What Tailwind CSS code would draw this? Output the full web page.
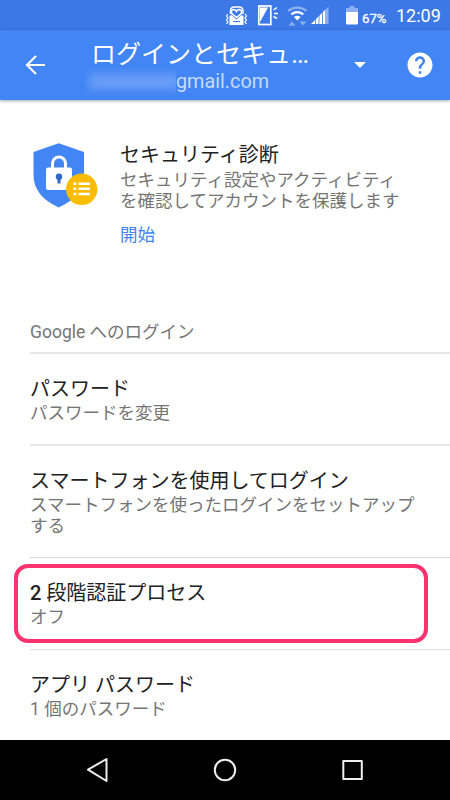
<!DOCTYPE html>
<html lang="ja">
<head>
<meta charset="utf-8">
<title>ログインとセキュリティ</title>
<script src="https://cdn.jsdelivr.net/npm/@tailwindcss/browser@4"></script>
</head>
<body class="w-[450px] h-[800px] overflow-hidden bg-white font-[Roboto,'Noto_Sans_CJK_JP',sans-serif]">
<div class="flex flex-col h-full">
  <!-- Status bar -->
  <div class="h-[30px] shrink-0 bg-[#3c78e6] flex items-center text-white">
    <svg class="ml-[224px] shrink-0" width="135" height="30" viewBox="224 0 135 30" fill="none" stroke="#fff">
      <path d="M230.500 14V11q0-4 4-4h4.500q4 0 4 4V14" stroke-width="1.500"/>
      <path d="M229.500 16l2-1 5 4.500 5-4.500 2 1v9h-14z" fill="#fff" stroke="none"/>
      <path d="M236.500 17.500 231.800 13.500Q230.500 10 233.500 9.500 235.500 9.500 236.500 11.500 237.500 9.500 239.500 9.500 242.500 10 241.200 13.500Z" stroke-width="1.600" fill="#3c78e6"/>
      <path d="M233 21.500h7" stroke="#3c78e6" stroke-width="1"/>
      <path d="M228 14l-1.500 2 1.500 2-1.500 2 1.500 2-1.500 2M245 14l1.500 2-1.500 2 1.500 2-1.500 2 1.500 2" stroke-width="1.200"/>
      <rect x="258.800" y="6" width="12" height="18.500" stroke-width="1.700"/>
      <path d="M260 7.500h8L260 22z" fill="#fff" stroke="none"/>
      <path d="M273.500 10l3.500-2.500M274 13.500h4M273.500 16.500l3.500 2" stroke-width="1.500"/>
      <path d="M288 10.700q9.300-6.500 18.600 0" stroke="#8bb0f1" stroke-width="2.500"/>
      <path d="M291.300 14.300q6-4.300 12 0" stroke-width="2.200"/>
      <path d="M294 17q3.300-2.500 6.600 0L297.300 20.500z" fill="#fff" stroke="none"/>
      <path d="M288.500 25.500l3.500-4 3.500 4zM299.500 21.500h7l-3.500 4z" fill="#8bb0f1" stroke="none"/>
      <path d="M311.500 24 328.500 6.500V24z" fill="#8bb0f1" stroke="none"/>
      <path d="M311 24 325 10V24z" fill="#fff" stroke="none"/>
      <path d="M315.500 17v7M319 14v10M322.500 11v13" stroke="#3c78e6" stroke-width=".8"/>
      <path d="M346 12V8h3.500V6h5v2h3.500v4z" fill="#8bb0f1" stroke="none"/>
      <path d="M346 12h12v11.500q0 1-1 1h-10q-1 0-1-1z" fill="#fff" stroke="none"/>
    </svg>
    <span class="ml-[3px] mt-[8px] text-[13.200px] leading-4 w-[27px] whitespace-nowrap [-webkit-text-stroke:0.3px_white]">67%</span>
    <span class="ml-[7px] mt-[2px] text-[18px] leading-5 whitespace-nowrap">12:09</span>
  </div>
  <!-- App bar -->
  <header class="relative z-10 h-[70px] shrink-0 bg-[#4285f4] flex items-center text-white shadow-[0_1px_3px_rgba(0,0,0,0.35)]">
    <svg class="ml-[25px] shrink-0" width="20" height="20" viewBox="0 0 20 20" fill="none" stroke="#fff" stroke-width="2.200"><path d="M20 10H2M11 1 2 10l9 9"/></svg>
    <div class="ml-[45px] w-[260px] shrink-0 pt-[4px]">
      <div class="text-[25px] leading-[30px] whitespace-nowrap ml-px">ログインとセキュ<span class="text-[27px] leading-none">…</span></div>
      <div class="flex items-center h-[24px] text-[19.800px] leading-6 text-[#c6dafc]">
        <div class="-ml-[6px] w-[92px] h-[28px] overflow-hidden"><div class="w-[91px] h-[15px] ml-[5px] mt-[6px] bg-[#6c9ff7] blur-[5px]"></div></div>
        <span>gmail.com</span>
      </div>
    </div>
    <svg class="ml-[4px] shrink-0" width="12" height="6" viewBox="0 0 12 6"><path d="M0 0h12L6 6z" fill="#fff"/></svg>
    <svg class="ml-[39px] shrink-0" width="30" height="30" viewBox="0 0 24 24"><path fill="#fff" d="M12 2C6.480 2 2 6.480 2 12s4.480 10 10 10 10-4.480 10-10S17.520 2 12 2zm1 17h-2v-2h2v2zm2.070-7.750l-.9.920C13.450 12.900 13 13.500 13 15h-2v-.5c0-1.100.45-2.100 1.170-2.830l1.240-1.260c.37-.36.590-.86.590-1.410 0-1.100-.9-2-2-2s-2 .9-2 2H8c0-2.210 1.790-4 4-4s4 1.790 4 4c0 .88-.36 1.680-.93 2.250z"/></svg>
  </header>
  <main class="relative flex-1 bg-white">
    <section class="flex h-[220px] pt-[42px]">
      <svg class="ml-[33px] mt-px shrink-0" width="66" height="66" viewBox="33 143 66 66">
        <path d="M58.700 143.300 84 152v23q0 21-25.300 32.500Q33.500 196 33.500 175V152z" fill="#4285f4"/>
        <rect x="46" y="167.500" width="26" height="22.500" rx="2" fill="#fff"/>
        <path d="M52.500 168v-4.500a6.500 6.500 0 0 1 13 0V168" fill="none" stroke="#fff" stroke-width="3"/>
        <circle cx="59" cy="176.800" r="3.200" fill="#3367c5"/><path d="M57.500 178h3v5.500h-3z" fill="#3367c5"/>
        <circle cx="81.700" cy="189.300" r="15.700" fill="#fbbc05"/>
        <path d="M73.500 183.700h2.800m2.200 0h11.500M73.500 188.800h2.800m2.200 0h11.500M73.500 194h2.800m2.200 0h11.500" stroke="#fff" stroke-width="2.600"/>
      </svg>
      <div class="ml-[21px]">
        <h2 class="text-[20px] leading-[26px] text-[#212121]">セキュリティ診断</h2>
        <p class="mt-[2px] text-[17.500px] leading-[20.500px] text-[#757575] whitespace-nowrap">セキュリティ設定やアクティビティ<br>を確認してアカウントを保護します</p>
        <a class="block mt-[13px] text-[17.500px] leading-[22px] text-[#4285f4]">開始</a>
      </div>
    </section>
    <div class="ml-[30px] h-[32px] pt-px text-[17.500px] leading-[22px] text-[#757575]">Google へのログイン</div>
    <ul class="ml-[30px]">
      <li class="h-[92px] border-t-2 border-[#e8e8e8] pt-[22px]">
        <div class="text-[20px] leading-[26px] text-[#212121]">パスワード</div>
        <div class="mt-px text-[17.500px] leading-[21px] text-[#757575]">パスワードを変更</div>
      </li>
      <li class="h-[113px] border-t-2 border-[#e8e8e8] pt-[22px]">
        <div class="text-[20px] leading-[26px] text-[#212121]">スマートフォンを使用してログイン</div>
        <div class="mt-px text-[17.500px] leading-[20.500px] text-[#757575] whitespace-nowrap">スマートフォンを使ったログインをセットアップ<br>する</div>
      </li>
      <li class="h-[92px] border-t border-[#dedede] pt-[22px]">
        <div class="text-[20px] leading-[26px] text-[#212121]"><span class="font-medium">2</span> 段階認証プロセス</div>
        <div class="mt-px text-[17.500px] leading-[21px] text-[#757575]">オフ</div>
      </li>
      <li class="h-[90px] border-t border-[#dedede] pt-[22px]">
        <div class="text-[20px] leading-[26px] text-[#212121]">アプリ パスワード</div>
        <div class="mt-px text-[17.500px] leading-[21px] text-[#757575]">1 個のパスワード</div>
      </li>
    </ul>
    <!-- Highlight around the two-step verification row -->
    <div class="absolute left-[14px] top-[464px] w-[414px] h-[79px] border-4 border-[#fa326f] rounded-[14px]"></div>
  </main>
  <nav class="h-[60px] shrink-0 bg-black">
    <svg width="450" height="60" viewBox="0 740 450 60" fill="none" stroke="#eee" stroke-width="2" stroke-linejoin="round"><path d="M88 769.700 106.500 759v22z"/><circle cx="225" cy="770" r="10.200"/><rect x="343.300" y="761" width="18.500" height="18"/></svg>
  </nav>
</div>
</body>
</html>
